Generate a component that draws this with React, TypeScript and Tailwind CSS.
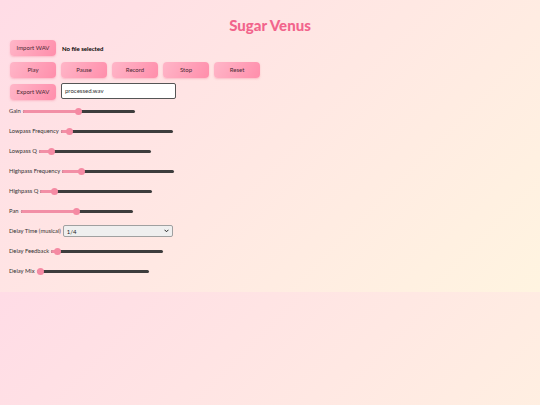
const sliders = [
  { label: "Gain", value: 0.5 },
  { label: "Lowpass Frequency", value: 0.05 },
  { label: "Lowpass Q", value: 0.09 },
  { label: "Highpass Frequency", value: 0.15 },
  { label: "Highpass Q", value: 0.1 },
  { label: "Pan", value: 0.5 },
];

const delaySliders = [
  { label: "Delay Feedback", value: 0.03 },
  { label: "Delay Mix", value: 0 },
];

function PinkButton({ children }: { children: string }) {
  return (
    <button className="h-[16px] w-[46px] shrink-0 rounded-[4px] bg-[linear-gradient(120deg,#ffb6c8,#ff8eab)] text-[6px] leading-none text-[#4a2a35] shadow-[0_1px_2px_rgba(240,110,140,0.35)]">
      {children}
    </button>
  );
}

function Slider({ label, value }: { label: string; value: number }) {
  const thumbLeft = value * 105;
  return (
    <div className="flex h-[20px] items-center">
      <span className="text-[5.8px] leading-none text-[#333]">{label}</span>
      <div className="relative ml-[2px] flex h-[7px] w-[112px] items-center">
        <div className="h-[3px] w-full rounded-full bg-[#3d3d3d]" />
        <div
          className="absolute left-0 h-[3px] rounded-full bg-[#f28fa6]"
          style={{ width: thumbLeft + 3.5 }}
        />
        <div
          className="absolute top-0 h-[7px] w-[7px] rounded-full bg-[#f58aa3]"
          style={{ left: thumbLeft }}
        />
      </div>
    </div>
  );
}

export default function App() {
  return (
    <div className="min-h-[405px] bg-[linear-gradient(135deg,#ffdce6,#fff4e0)] bg-[length:100%_292px] bg-repeat-y font-['Lato','Liberation_Sans',sans-serif]">
      <div className="flex flex-col px-[9px] pt-[17px] pb-[11px]">
        <h1 className="h-[16px] text-center text-[15px] leading-[16px] font-black text-[#f2648c]">
          Sugar Venus
        </h1>

        <div className="mt-[7px] flex items-center gap-[6px] pl-[1px]">
          <PinkButton>Import WAV</PinkButton>
          <span className="text-[6px] font-bold text-black">No file selected</span>
        </div>

        <div className="mt-[6px] flex items-center gap-[5px] pl-[1px]">
          <PinkButton>Play</PinkButton>
          <PinkButton>Pause</PinkButton>
          <PinkButton>Record</PinkButton>
          <PinkButton>Stop</PinkButton>
          <PinkButton>Reset</PinkButton>
        </div>

        <div className="mt-[6px] flex items-center gap-[5px] pl-[1px]">
          <PinkButton>Export WAV</PinkButton>
          <div className="-mt-[3px] flex h-[16px] w-[115px] items-center rounded-[2px] border border-[#555] bg-white px-[3px] text-[6px] text-[#333]">
            processed.wav
          </div>
        </div>

        <div className="mt-[1px] flex flex-col">
          {sliders.map((s) => (
            <Slider key={s.label} label={s.label} value={s.value} />
          ))}
          <div className="flex h-[20px] items-center">
            <span className="text-[5.8px] leading-none text-[#333]">Delay Time (musical)</span>
            <div className="ml-[2px] flex h-[12px] w-[110px] items-center justify-between rounded-[2px] border border-[#a0a0a0] bg-[#efefef] px-[3px] text-[6px] text-[#222]">
              <span>1/4</span>
              <svg width="5" height="4" viewBox="0 0 10 8">
                <path d="M1 1.5 L5 5.5 L9 1.5" fill="none" stroke="#222" strokeWidth="2" />
              </svg>
            </div>
          </div>
          {delaySliders.map((s) => (
            <Slider key={s.label} label={s.label} value={s.value} />
          ))}
        </div>
      </div>
    </div>
  );
}
